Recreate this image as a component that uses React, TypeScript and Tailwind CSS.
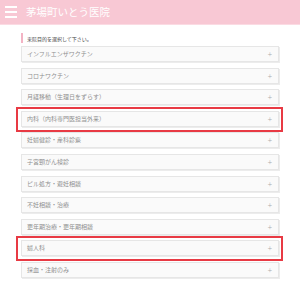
import React from 'react'

const items = [
  'インフルエンザワクチン',
  'コロナワクチン',
  '月経移動（生理日をずらす）',
  '内科（内科専門医担当外来）',
  '妊婦健診・産科診察',
  '子宮頸がん検診',
  'ピル処方・避妊相談',
  '不妊相談・治療',
  '更年期治療・更年期相談',
  '婦人科',
  '採血・注射のみ',
]

const marked = [3, 9]

export default function App() {
  return (
    <div
      className="w-[300px] h-[287px] bg-white overflow-hidden"
      style={{ fontFamily: '"Noto Sans CJK JP", "Noto Sans", sans-serif' }}
    >
      {/* header bar */}
      <div className="h-[25px] bg-[#f8c8d4] border-b border-[#fbdbe3] flex items-center pl-[5px] gap-[9px]">
        <div className="flex flex-col gap-[3.5px] w-[12px]">
          <span className="block h-[1.5px] bg-white" />
          <span className="block h-[1.5px] bg-white" />
          <span className="block h-[1.5px] bg-white" />
        </div>
        <span className="text-white text-[10.5px] leading-none">茅場町いとう医院</span>
      </div>

      <div className="px-[21px] pt-[8px]">
        {/* notice */}
        <div className="border-l-2 border-[#f3b3c4] h-[10px] flex items-center pl-[4px]">
          <span className="text-[5px] leading-none text-[#444]">来院目的を選択して下さい。</span>
        </div>

        {/* list */}
        <div className="mt-[3px] flex flex-col gap-[5.6px]">
          {items.map((label, i) => (
            <div
              key={label}
              className="relative h-[16px] bg-[#fafafa] border border-[#e6e6e6] shadow-[1px_1px_0_#ececec] flex items-center justify-between pl-[5px] pr-[6px]"
            >
              <span className="text-[6px] leading-none text-[#909090]">{label}</span>
              <span className="text-[8px] leading-none text-[#aaaaaa] font-light">+</span>
              {marked.includes(i) && (
                <div className="absolute top-[-5px] bottom-[-6px] left-[-6px] right-[-5px] border-2 border-[#e83a44] pointer-events-none" />
              )}
            </div>
          ))}
        </div>
      </div>
    </div>
  )
}
